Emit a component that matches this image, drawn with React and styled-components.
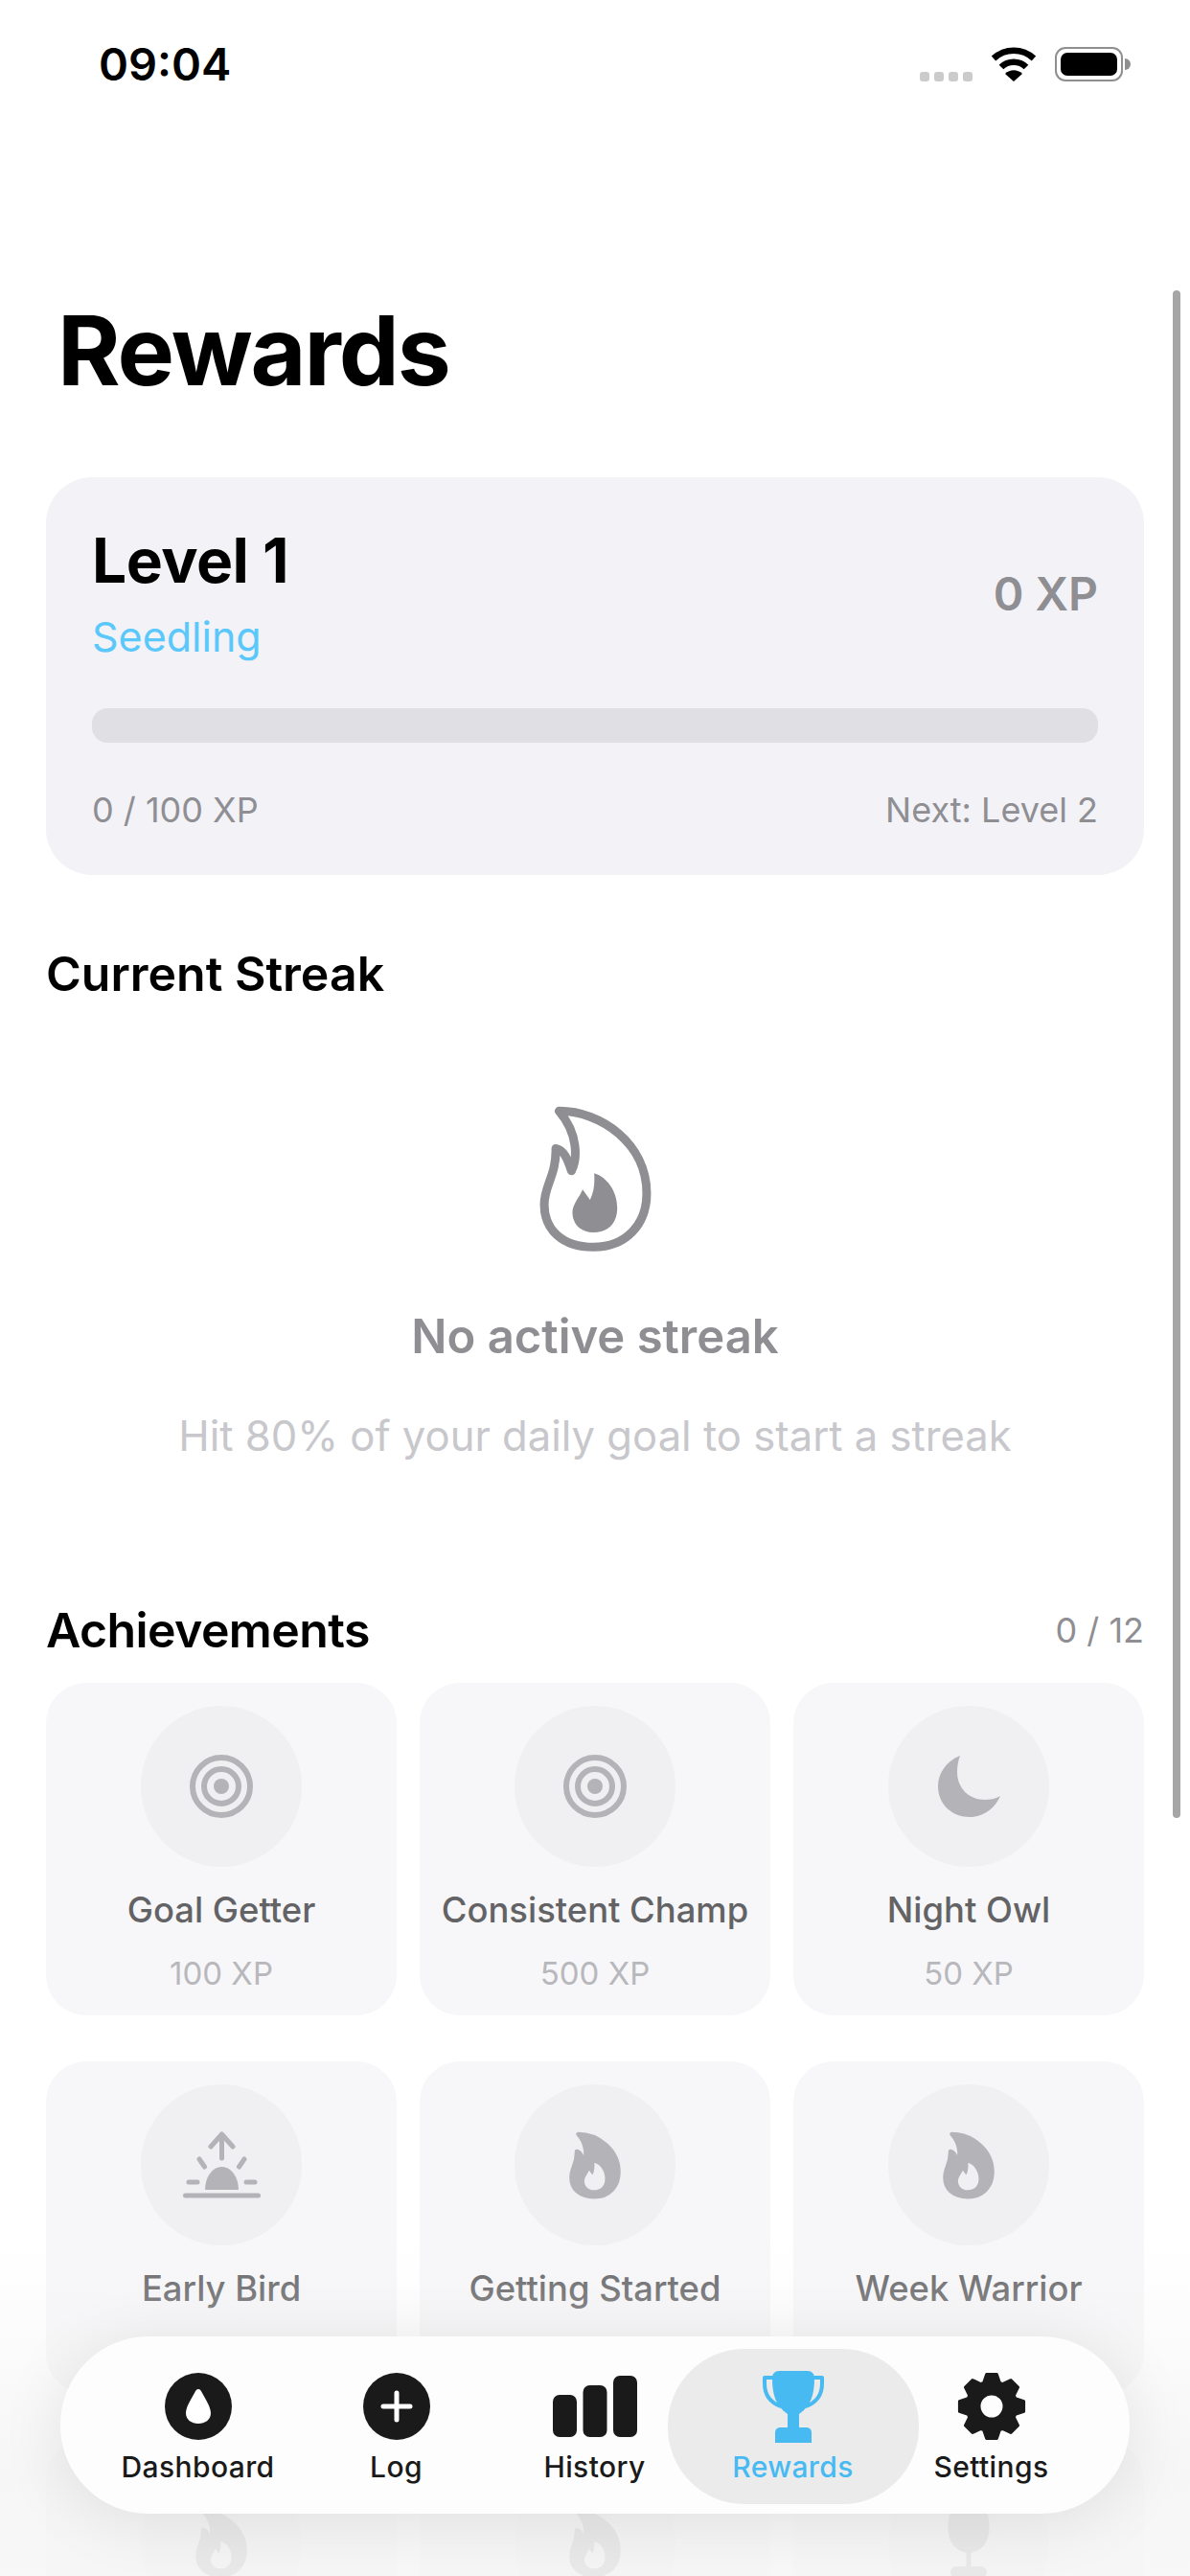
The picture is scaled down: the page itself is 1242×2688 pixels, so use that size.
import React from 'react';
import styled, { createGlobalStyle } from 'styled-components';

const GlobalStyle = createGlobalStyle`
  html, body {
    margin: 0;
    padding: 0;
    background: #fff;
    font-family: Inter, "Noto Sans", sans-serif;
  }
`;

const FLAME_OUTLINE = 'M548 118C680 118 822 220 822 375C822 470 760 543 655 543C560 543 502 490 502 410C502 350 540 320 538 235C565 240 575 270 587 305C605 270 610 190 548 118Z';
const FLAME_INNER = 'M658 312C700 325 730 370 730 420C730 470 700 497 655 497C615 497 590 470 590 435C590 410 610 390 622 363L645 395C658 370 660 340 658 312Z';

const gearPath = () => {
  const points = [];
  for (let i = 0; i < 8; i++) {
    const a = (i * Math.PI) / 4 - Math.PI / 2;
    const step = Math.PI / 4;
    [[-0.42, 26], [-0.2, 34], [0.2, 34], [0.42, 26]].forEach(([f, r]) => {
      points.push(`${(36 + r * Math.cos(a + f * step)).toFixed(2)} ${(36 + r * Math.sin(a + f * step)).toFixed(2)}`);
    });
  }
  return `M${points.join('L')}Z`;
};

const BigFlame = () => (
  <svg width="117" height="152" viewBox="487 102 350 455">
    <path d={FLAME_OUTLINE} fill="none" stroke="#8e8e93" strokeWidth="27" strokeLinejoin="round" />
    <path d={FLAME_INNER} fill="#8e8e93" />
  </svg>
);

const SmallFlame = () => (
  <svg width="54" height="71" viewBox="487 102 350 455">
    <path d={FLAME_OUTLINE} fill="#b4b4b8" stroke="#b4b4b8" strokeWidth="27" strokeLinejoin="round" />
    <path d={FLAME_INNER} fill="#f0f0f2" />
  </svg>
);

const Target = () => (
  <svg width="66" height="66" viewBox="0 0 66 66" fill="none" stroke="#b4b4b8" strokeWidth="6">
    <circle cx="33" cy="33" r="30" />
    <circle cx="33" cy="33" r="18" />
    <circle cx="33" cy="33" r="8" fill="#b4b4b8" stroke="none" />
  </svg>
);

const Moon = () => (
  <svg width="65" height="66" viewBox="0 0 65 66">
    <path fill="#b4b4b8" d="M23 1C8 7 0 20 0 33C0 52 15 65 33 65C47 65 59 57 65 43C60 46 54 47 49 47C32 47 20 35 20 18C20 12 21 6 23 1Z" />
  </svg>
);

const Sunrise = () => (
  <svg width="81" height="70" viewBox="0 0 81 70" fill="none" stroke="#b4b4b8" strokeWidth="5" strokeLinecap="round" strokeLinejoin="round">
    <path d="M40.5 3V28M29 16L40.5 3L52 16" />
    <path d="M17 29L22.5 37M64 29L58.5 37M6 53H15M66 53H75M2.5 67H78.5" />
    <path d="M23 61A17.5 24 0 0 1 58 61Z" fill="#b4b4b8" stroke="none" />
  </svg>
);

const Goblet = () => (
  <svg width="50" height="72" viewBox="0 0 50 72" fill="#b4b4b8">
    <path d="M7 0H43C50 18 48 44 25 46C2 44 0 18 7 0Z" />
    <rect x="22.5" y="44" width="5" height="17" />
    <rect x="6" y="60" width="38" height="12" rx="6" />
  </svg>
);

const DropIcon = () => (
  <svg width="70" height="70" viewBox="0 0 70 70">
    <circle cx="35" cy="35" r="35" fill="#1a1a1a" />
    <path fill="#fff" d="M35 17C37 17 38 19 39 21C43 28 48 36 48 42C48 49 42 53 35 53C28 53 22 49 22 42C22 36 27 28 31 21C32 19 33 17 35 17Z" />
  </svg>
);

const PlusIcon = () => (
  <svg width="70" height="70" viewBox="0 0 70 70">
    <circle cx="35" cy="35" r="35" fill="#1a1a1a" />
    <path d="M35 21V49M21 35H49" stroke="#fff" strokeWidth="5" strokeLinecap="round" />
  </svg>
);

const BarsIcon = () => (
  <svg width="88" height="64" viewBox="0 0 88 64" fill="#1a1a1a">
    <rect x="0" y="20" width="25" height="44" rx="7" />
    <rect x="31.5" y="10" width="25" height="54" rx="7" />
    <rect x="63" y="0" width="25" height="64" rx="7" />
  </svg>
);

const TrophyIcon = () => (
  <svg width="66" height="75" viewBox="0 0 66 75">
    <path fill="#47baf2" d="M18 0H48C52 0 55 3 55 7C55 24 52 36 39 45V59H46C50 59 52 61 52 65V75H14V65C14 61 16 59 20 59H27V45C14 36 11 24 11 7C11 3 14 0 18 0Z" />
    <path fill="none" stroke="#47baf2" strokeWidth="4" strokeLinejoin="round" d="M13 7H3V13C3 25 9 33 20 37M53 7H63V13C63 25 57 33 46 37" />
  </svg>
);

const GearIcon = () => (
  <svg width="72" height="72" viewBox="0 0 72 72">
    <path fillRule="evenodd" fill="#1a1a1a" stroke="#1a1a1a" strokeWidth="3" strokeLinejoin="round" d={`${gearPath()}M49 36A13 13 0 1 0 23 36A13 13 0 1 0 49 36Z`} />
  </svg>
);

const ACHIEVEMENTS = [
  { name: 'Goal Getter', xp: '100 XP', icon: <Target /> },
  { name: 'Consistent Champ', xp: '500 XP', icon: <Target /> },
  { name: 'Night Owl', xp: '50 XP', icon: <Moon /> },
  { name: 'Early Bird', icon: <Sunrise /> },
  { name: 'Getting Started', icon: <SmallFlame /> },
  { name: 'Week Warrior', icon: <SmallFlame /> },
  { icon: <SmallFlame /> },
  { icon: <SmallFlame /> },
  { icon: <Goblet /> },
];

const NAV_ITEMS = [
  { label: 'Dashboard', icon: <DropIcon /> },
  { label: 'Log', icon: <PlusIcon /> },
  { label: 'History', icon: <BarsIcon /> },
  { label: 'Rewards', icon: <TrophyIcon />, active: true },
  { label: 'Settings', icon: <GearIcon /> },
];

export default function App() {
  return (
    <>
      <GlobalStyle />
      <Screen>
        <StatusBar>
          <Clock>09:04</Clock>
          <StatusIcons>
            <Dots><i /><i /><i /><i /></Dots>
            <svg width="48" height="36" viewBox="0 0 48 36" fill="none" stroke="#000" strokeWidth="6.5">
              <path d="M3 12C15 1 33 1 45 12" />
              <path d="M11 21C18 14 30 14 37 21" />
              <path d="M24 36L15 28C20 23 28 23 33 28Z" fill="#000" stroke="none" />
            </svg>
            <Battery><BatteryFill /></Battery>
          </StatusIcons>
        </StatusBar>

        <Title>Rewards</Title>

        <LevelCard>
          <LevelHeader>
            <div>
              <LevelName>Level 1</LevelName>
              <LevelTier>Seedling</LevelTier>
            </div>
            <TotalXp>0 XP</TotalXp>
          </LevelHeader>
          <ProgressTrack />
          <LevelFooter>
            <span>0 / 100 XP</span>
            <span>Next: Level 2</span>
          </LevelFooter>
        </LevelCard>

        <StreakHeading>Current Streak</StreakHeading>
        <EmptyStreak>
          <BigFlame />
          <EmptyTitle>No active streak</EmptyTitle>
          <EmptyHint>Hit 80% of your daily goal to start a streak</EmptyHint>
        </EmptyStreak>

        <AchievementsHeader>
          <AchievementsHeading>Achievements</AchievementsHeading>
          <Count>0 / 12</Count>
        </AchievementsHeader>
        <AchievementGrid>
          {ACHIEVEMENTS.map((a, i) => (
            <AchievementCard key={i}>
              <IconCircle>{a.icon}</IconCircle>
              {a.name && <AchievementName>{a.name}</AchievementName>}
              {a.xp && <AchievementXp>{a.xp}</AchievementXp>}
            </AchievementCard>
          ))}
        </AchievementGrid>

        <ScrollThumb />
        <BottomFade />

        <TabBar>
          <ActivePill />
          {NAV_ITEMS.map(item => (
            <Tab key={item.label} $active={item.active}>
              <TabIcon>{item.icon}</TabIcon>
              <TabLabel>{item.label}</TabLabel>
            </Tab>
          ))}
        </TabBar>
      </Screen>
    </>
  );
}

const Screen = styled.div`
  position: relative;
  width: 1242px;
  height: 2688px;
  overflow: hidden;
  background: #fff;
  color: #000;
  padding: 0 48px;
  box-sizing: border-box;
`;

const StatusBar = styled.div`
  display: flex;
  align-items: center;
  justify-content: space-between;
  height: 134px;
  margin: 0 -48px;
  padding: 0 70px 0 103px;
`;

const Clock = styled.div`
  font-size: 47px;
  font-weight: 600;
  line-height: 60px;
`;

const StatusIcons = styled.div`
  display: flex;
  align-items: flex-end;
  gap: 19px;
  height: 36px;
`;

const Dots = styled.div`
  display: flex;
  gap: 5px;
  i {
    display: block;
    width: 10px;
    height: 10px;
    border-radius: 3px;
    background: #cbcbcb;
  }
`;

const Battery = styled.div`
  position: relative;
  width: 71px;
  height: 36px;
  box-sizing: border-box;
  padding: 4px;
  border: 2px solid #8f8f8f;
  border-radius: 11px;
  &::after {
    content: '';
    position: absolute;
    right: -10px;
    top: 10px;
    width: 6px;
    height: 12px;
    border-radius: 0 6px 6px 0;
    background: #8f8f8f;
  }
`;

const BatteryFill = styled.div`
  width: 100%;
  height: 100%;
  border-radius: 7px;
  background: #000;
`;

const Title = styled.h1`
  margin: 172px 0 72px 12px;
  font-size: 100px;
  font-weight: 700;
  line-height: 120px;
  letter-spacing: -2px;
`;

const LevelCard = styled.section`
  padding: 48px 48px 46px;
  border-radius: 48px;
  background: #f2f2f7;
`;

const LevelHeader = styled.div`
  display: flex;
  align-items: center;
  justify-content: space-between;
`;

const LevelName = styled.div`
  font-size: 64px;
  font-weight: 700;
  line-height: 78px;
  letter-spacing: -0.5px;
`;

const LevelTier = styled.div`
  margin-top: 12px;
  font-size: 43px;
  line-height: 56px;
  color: #5ac8fa;
`;

const TotalXp = styled.div`
  font-size: 48px;
  font-weight: 600;
  color: #8e8e93;
`;

const ProgressTrack = styled.div`
  height: 36px;
  margin-top: 47px;
  border-radius: 16px;
  background: #dfdfe4;
`;

const LevelFooter = styled.div`
  display: flex;
  justify-content: space-between;
  margin-top: 48px;
  font-size: 36px;
  line-height: 44px;
  color: #8e8e93;
`;

const SectionHeading = styled.h2`
  margin: 0;
  font-size: 50px;
  font-weight: 600;
  line-height: 64px;
`;

const StreakHeading = styled(SectionHeading)`
  margin-top: 71px;
`;

const AchievementsHeading = styled(SectionHeading)`
  letter-spacing: -0.6px;
`;

const EmptyStreak = styled.div`
  display: flex;
  flex-direction: column;
  align-items: center;
  padding-top: 106px;
`;

const EmptyTitle = styled.div`
  margin-top: 57px;
  font-size: 49px;
  font-weight: 600;
  line-height: 64px;
  color: #8e8e93;
`;

const EmptyHint = styled.div`
  margin-top: 44px;
  font-size: 43.6px;
  line-height: 56px;
  color: #c7c7cc;
`;

const AchievementsHeader = styled.div`
  display: flex;
  align-items: center;
  justify-content: space-between;
  margin-top: 142px;
`;

const Count = styled.span`
  font-size: 36px;
  color: #8e8e93;
`;

const AchievementGrid = styled.div`
  display: grid;
  grid-template-columns: repeat(3, 1fr);
  gap: 48px 24px;
  margin-top: 23px;
`;

const AchievementCard = styled.div`
  display: flex;
  flex-direction: column;
  align-items: center;
  height: 347px;
  box-sizing: border-box;
  padding-top: 24px;
  border-radius: 42px;
  background: #f7f7f9;
`;

const IconCircle = styled.div`
  display: flex;
  align-items: center;
  justify-content: center;
  flex: none;
  width: 168px;
  height: 168px;
  border-radius: 50%;
  background: #f0f0f2;
`;

const AchievementName = styled.div`
  margin-top: 23px;
  font-size: 36.4px;
  font-weight: 500;
  line-height: 44px;
  color: #636366;
  white-space: nowrap;
`;

const AchievementXp = styled.div`
  margin-top: 24px;
  font-size: 33px;
  line-height: 40px;
  color: #b8b8bc;
`;

const ScrollThumb = styled.div`
  position: absolute;
  top: 303px;
  right: 10px;
  width: 8px;
  height: 1594px;
  border-radius: 4px;
  background: #a6a6a6;
`;

const BottomFade = styled.div`
  position: absolute;
  left: 0;
  right: 0;
  bottom: 0;
  height: 350px;
  background: linear-gradient(to bottom, rgba(255, 255, 255, 0), rgba(244, 244, 244, 0.8) 70%, rgba(246, 246, 246, 0.8));
`;

const TabBar = styled.nav`
  position: absolute;
  left: 63px;
  top: 2438px;
  display: grid;
  grid-template-columns: repeat(5, 207px);
  width: 1116px;
  height: 185px;
  box-sizing: border-box;
  padding: 37px 0 0 40px;
  border-radius: 92px;
  background: #fdfdfd;
  box-shadow: 0 8px 70px rgba(0, 0, 0, 0.09);
`;

const ActivePill = styled.div`
  position: absolute;
  left: 634px;
  top: 13px;
  width: 262px;
  height: 162px;
  border-radius: 80px;
  background: #ebebec;
`;

const Tab = styled.div`
  position: relative;
  display: flex;
  flex-direction: column;
  align-items: center;
  color: ${({ $active }) => ($active ? '#47baf2' : '#1a1a1a')};
`;

const TabIcon = styled.div`
  display: flex;
  align-items: center;
  justify-content: center;
  height: 72px;
`;

const TabLabel = styled.div`
  margin-top: 9px;
  font-size: 30px;
  font-weight: 500;
  line-height: 36px;
  letter-spacing: 0.4px;
`;
